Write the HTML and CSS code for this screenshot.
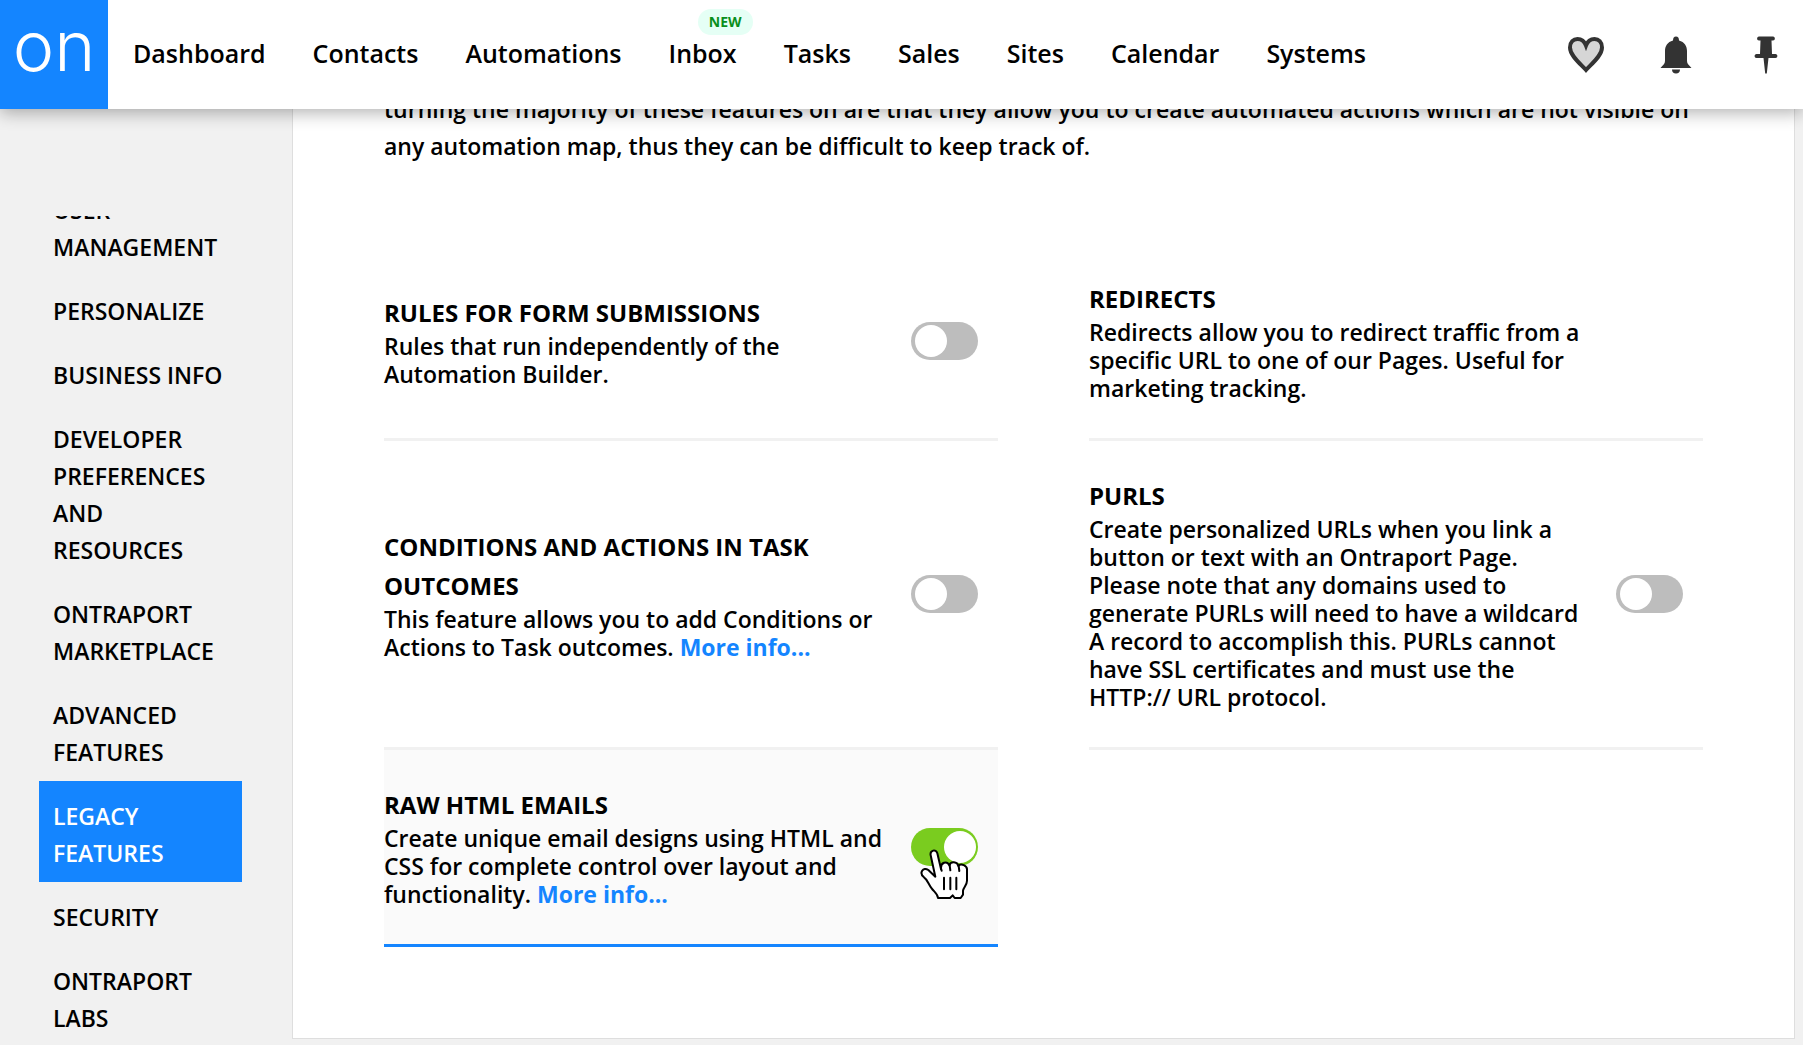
FILE: index.html
```
<!DOCTYPE html>
<html lang="en">
<head>
<meta charset="UTF-8">
<title>Legacy Features</title>
<meta name="viewport" content="width=device-width, initial-scale=1.0">
<link rel="stylesheet" href="styles.css">
</head>
<body>

<header class="topbar">
  <a class="logo" href="#">on</a>
  <nav class="main-nav">
    <a href="#">Dashboard</a>
    <a href="#">Contacts</a>
    <a href="#">Automations</a>
    <a href="#">Inbox<span class="badge">NEW</span></a>
    <a href="#">Tasks</a>
    <a href="#">Sales</a>
    <a href="#">Sites</a>
    <a href="#">Calendar</a>
    <a href="#">Systems</a>
  </nav>
  <div class="tools">
    <button type="button" aria-label="Favorites">
      <svg width="36" height="36" viewBox="0 0 36 36"><path d="M18 33C12 26.500 2 18.500 2 10.500C2 5 5.500 2 9.500 2C13.500 2 16.500 4.500 18 8.500C19.500 4.500 22.500 2 26.500 2C30.500 2 34 5 34 10.500C34 18.500 24 26.500 18 33Z" fill="#d6d6d6" stroke="#333" stroke-width="4"/></svg>
    </button>
    <button type="button" aria-label="Notifications">
      <svg width="36" height="38" viewBox="0 0 36 38"><path d="M18 0.500C20 0.500 21 2 21 4.500C26.500 6 29 10 29 15V25C29 28 31 29 33.500 32H2.500C5 29 7 28 7 25V15C7 10 9.500 6 15 4.500C15 2 16 0.500 18 0.500ZM14 33.500H22C22 36 20.500 37.500 18 37.500C15.500 37.500 14 36 14 33.500Z" fill="#333"/></svg>
    </button>
    <button type="button" aria-label="Pin">
      <svg width="36" height="38" viewBox="0 0 36 38"><path d="M11 0.500H25C27.500 0.500 27.500 4.500 25 4.500H23.500L24 18H27.500C30 18 30 22 27.500 22H20.500L18.800 37.500H17.200L15.500 22H8.500C6 22 6 18 8.500 18H12L12.500 4.500H11C8.500 4.500 8.500 0.500 11 0.500Z" fill="#333"/></svg>
    </button>
  </div>
</header>

<div class="page">
  <aside class="sidebar">
    <nav class="side-nav">
      <a href="#">User Management</a>
      <a href="#">Personalize</a>
      <a href="#">Business Info</a>
      <a href="#">Developer Preferences and Resources</a>
      <a href="#">Ontraport Marketplace</a>
      <a href="#">Advanced Features</a>
      <a href="#" class="active">Legacy Features</a>
      <a href="#">Security</a>
      <a href="#">Ontraport Labs</a>
    </nav>
  </aside>

  <main class="panel">
    <p class="intro">turning the majority of these features on are that they allow you to create automated actions which are not visible on any automation map, thus they can be difficult to keep track of.</p>

    <div class="features">
      <section class="feature">
        <div class="feature-text">
          <h2><label for="rules">Rules for Form Submissions</label></h2>
          <p>Rules that run independently of the Automation Builder.</p>
        </div>
        <input type="checkbox" class="toggle" id="rules">
      </section>

      <section class="feature">
        <div class="feature-text">
          <h2>Redirects</h2>
          <p>Redirects allow you to redirect traffic from a specific URL to one of our Pages. Useful for marketing tracking.</p>
        </div>
      </section>

      <section class="feature">
        <div class="feature-text">
          <h2><label for="conditions">Conditions and Actions in Task Outcomes</label></h2>
          <p>This feature allows you to add Conditions or Actions to Task outcomes. <a href="#">More info...</a></p>
        </div>
        <input type="checkbox" class="toggle" id="conditions">
      </section>

      <section class="feature">
        <div class="feature-text">
          <h2><label for="purls">PURLs</label></h2>
          <p>Create personalized URLs when you link a button or text with an Ontraport Page. Please note that any domains used to generate PURLs will need to have a wildcard A record to accomplish this. PURLs cannot have SSL certificates and must use the HTTP:// URL protocol.</p>
        </div>
        <input type="checkbox" class="toggle" id="purls">
      </section>

      <section class="feature selected">
        <div class="feature-text">
          <h2><label for="raw-html">Raw HTML Emails</label></h2>
          <p>Create unique email designs using HTML and CSS for complete control over layout and functionality. <a href="#">More info...</a></p>
        </div>
        <div class="toggle-wrap">
          <input type="checkbox" class="toggle" id="raw-html" checked>
          <svg class="pointer" width="50" height="52" viewBox="90 145 150 156"><path d="M136 228L122 164C119 149 138 143 142 158L153 205C151 184 171 180 178 194C182 181 202 182 205 196C212 187 233 194 231 209V240C231 253 221 260 219 270V282L212 292H194L188 284L180 292H144C143 279 133 274 125 263C115 250 112 236 102 230C86 217 99 197 115 208Z" fill="#fff" stroke="#000" stroke-width="6" stroke-linejoin="round"/><path d="M153 203L155 210M179 194L181 209M206 196L208 211M162 231V266M181 231V266M199 231V266" fill="none" stroke="#000" stroke-width="6" stroke-linecap="round"/></svg>
        </div>
      </section>
    </div>
  </main>
</div>

</body>
</html>
```
FILE: styles.css
```
* {
  box-sizing: border-box;
}
body {
  margin: 0;
  height: 100vh;
  display: flex;
  flex-direction: column;
  overflow: hidden;
  background-color: #f1f1f1;
  color: #000;
  font-family: "Open Sans", sans-serif;
  font-size: 23px;
  font-weight: 600;
}
a {
  color: inherit;
  text-decoration: none;
}

/* Top bar */
.topbar {
  position: relative;
  z-index: 1;
  flex: none;
  display: flex;
  height: 109px;
  background-color: #fff;
  box-shadow: 0 4px 16px rgba(0,0,0,.3);
}
.logo {
  width: 108px;
  background-color: #1485ff;
  color: #fff;
  font-family: Inter, sans-serif;
  font-size: 70px;
  font-weight: 300;
  line-height: 92px;
  text-align: center;
}
.main-nav {
  display: flex;
  align-items: center;
  gap: 47px;
  padding: 0 0 4px 25px;
  font-size: 25px;
}
.main-nav a {
  position: relative;
}
.badge {
  position: absolute;
  top: -27px;
  right: -16px;
  padding: 0 11px;
  border-radius: 13px;
  background-color: #e5fff5;
  color: #0a8f1c;
  font-size: 14px;
  font-weight: 700;
  line-height: 26px;
}
.tools {
  display: flex;
  align-items: center;
  gap: 54px;
  margin-left: auto;
  padding-right: 19px;
}
.tools button {
  display: flex;
  padding: 0;
  border: 0;
  background: none;
  cursor: pointer;
}

.page {
  flex: 1;
  min-height: 0;
  display: flex;
}

/* Settings menu, scrolled part way down */
.sidebar {
  flex: none;
  width: 292px;
  margin-top: 107px;
  padding: 0 50px 0 39px;
  overflow: hidden;
}
.side-nav {
  display: flex;
  flex-direction: column;
  margin-top: -41px;
  line-height: 37px;
  text-transform: uppercase;
}
.side-nav a {
  padding: 17px 14px 10px;
}
.side-nav a.active {
  background-color: #1485ff;
  color: #fff;
}

/* Content panel */
.panel {
  flex: 1;
  align-self: flex-start;
  margin: -18px 8px 0 0;
  padding: 0 91px 91px;
  border: 1px solid #dedede;
  border-top: 0;
  background-color: #fff;
}
.intro {
  margin: 0 0 79px;
  line-height: 37px;
}
.features {
  display: grid;
  grid-template-columns: 1fr 1fr;
  column-gap: 91px;
}
.feature {
  display: grid;
  grid-template-columns: 1fr 67px;
  column-gap: 26px;
  align-items: center;
  padding: 35px 20px 36px 0;
  border-bottom: 3px solid #f1f1f1;
}
.feature.selected {
  background-color: #fafafa;
  border-bottom-color: #1485ff;
}
.feature h2 {
  margin: 0;
  font-size: 24px;
  font-weight: 700;
  line-height: 39px;
  text-transform: uppercase;
}
.feature p {
  margin: 0;
  line-height: 28px;
}
.feature p a {
  color: #1485ff;
  font-weight: 700;
}

/* Switches */
.toggle {
  appearance: none;
  display: block;
  width: 67px;
  height: 38px;
  margin: 0;
  padding: 3px 4px;
  border-radius: 19px;
  background-color: #bdbdbd;
  cursor: pointer;
}
.toggle::before {
  content: "";
  display: block;
  width: 32px;
  height: 32px;
  border-radius: 50%;
  background-color: #fff;
}
.toggle:checked {
  padding: 3px 2px;
  background-color: #7acc1f;
}
.toggle:checked::before {
  margin-left: auto;
}
.toggle-wrap {
  position: relative;
}
.pointer {
  position: absolute;
  top: 21px;
  left: 9px;
  pointer-events: none;
}
```
